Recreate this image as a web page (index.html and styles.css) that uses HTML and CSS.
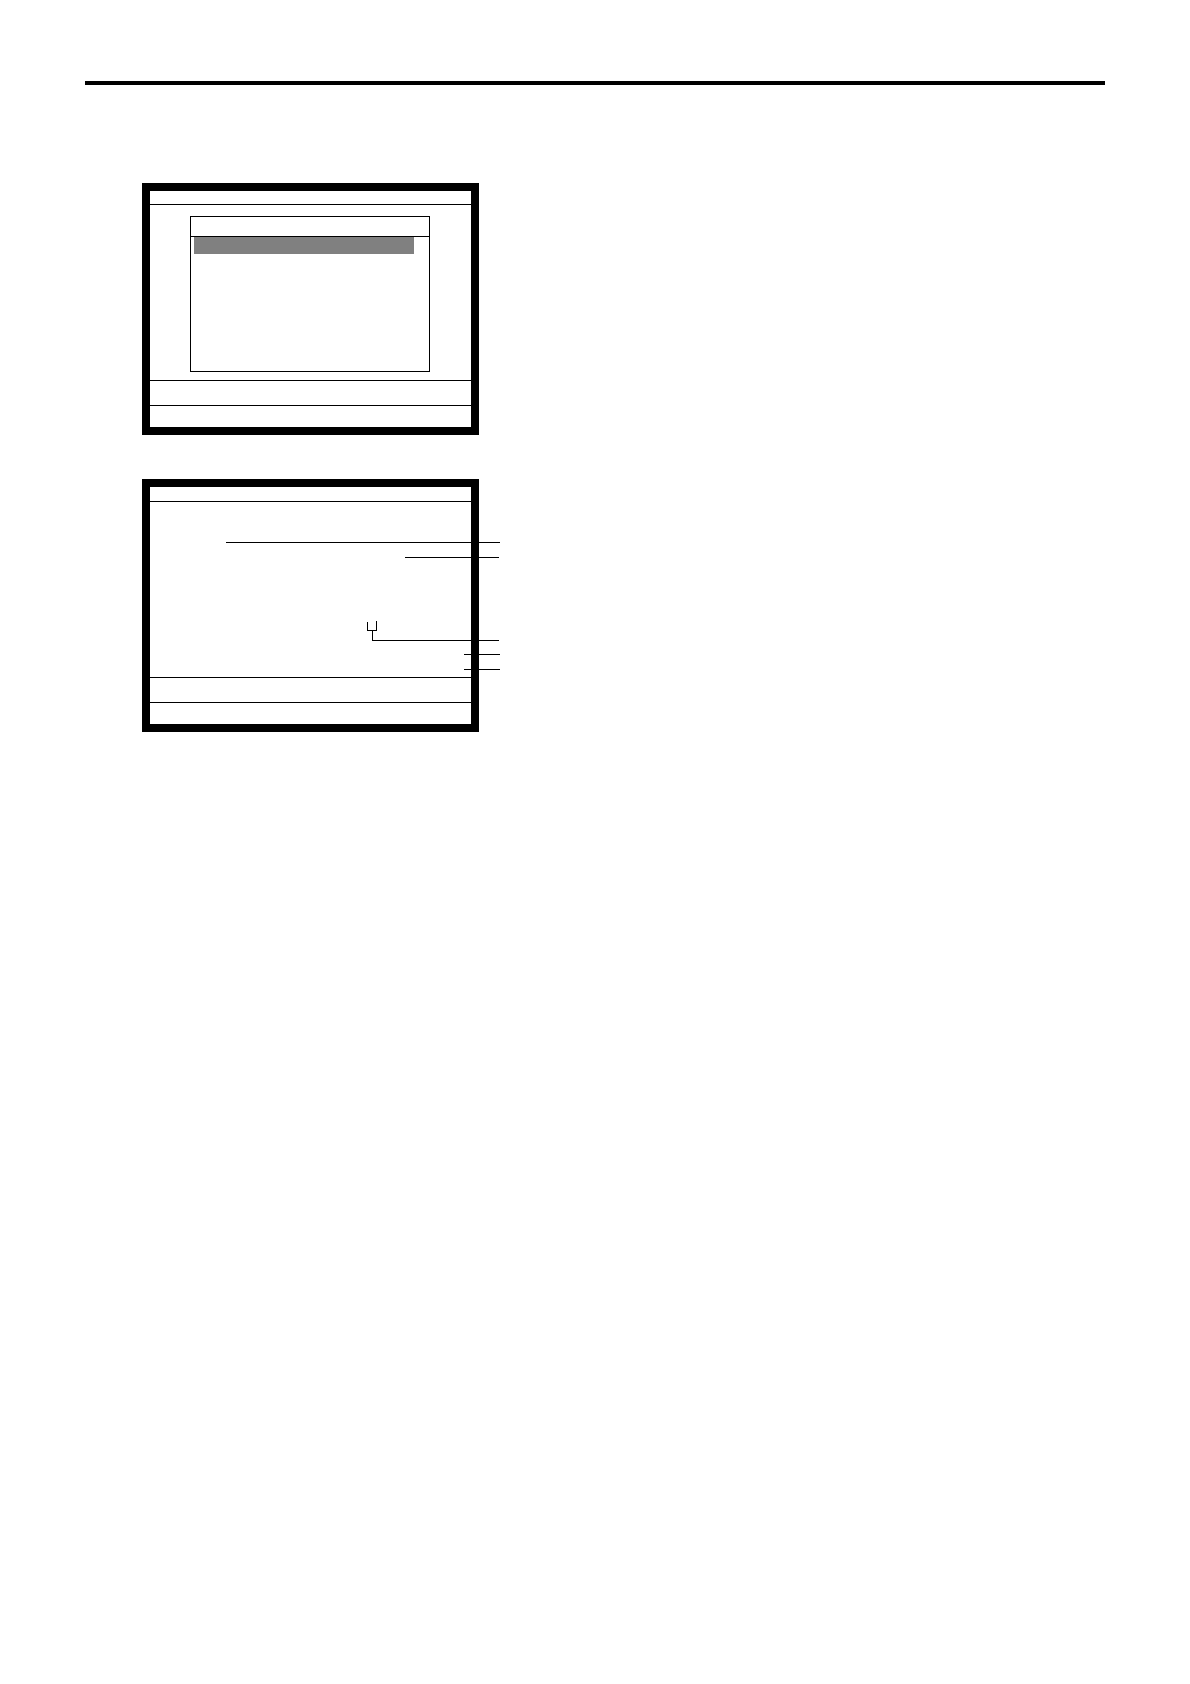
FILE: index.html
```html
<!DOCTYPE html>
<html lang="en">
<head>
    <meta charset="UTF-8">
    <meta name="viewport" content="width=device-width, initial-scale=1.0">
    <link rel="stylesheet" href="styles.css">
</head>
<body>
    <hr class="page-rule">

    <main class="screens">
        <!-- Screen with menu window -->
        <section class="screen">
            <div class="title-bar"></div>
            <div class="screen-body">
                <div class="menu">
                    <div class="menu-title"></div>
                    <div class="menu-selected"></div>
                </div>
            </div>
            <div class="message-bar"></div>
            <div class="key-bar"></div>
        </section>

        <!-- Screen with leader lines -->
        <section class="screen screen-detail">
            <div class="title-bar"></div>
            <div class="screen-body">
                <svg class="leaders" width="350" height="175" viewBox="0 0 350 175" aria-hidden="true">
                    <path d="M76 40.5H350"/>
                    <path d="M255 55.5H349"/>
                    <path d="M217.5 120V128.5H226.5V119"/>
                    <path d="M222.5 128.5V138.5H349"/>
                    <path d="M314 152.5H350"/>
                    <path d="M314 167.5H350"/>
                </svg>
            </div>
            <div class="message-bar"></div>
            <div class="key-bar"></div>
        </section>
    </main>
</body>
</html>
```
FILE: styles.css
```css
* {
    box-sizing: border-box;
}
body {
    margin: 0;
    padding: 81px 85px;
    background: #fff;
    font-family: "Liberation Sans", Arial, sans-serif;
}
.page-rule {
    height: 4px;
    margin: 0 0 98px;
    border: none;
    background: #000;
}
.screens {
    display: flex;
    flex-direction: column;
    gap: 44px;
    padding-left: 57px;
}
.screen {
    width: 100%;
    max-width: 337px;
    border: 8px solid #000;
}
.title-bar {
    height: 14px;
    border-bottom: 1px solid #000;
}
.screen-detail .title-bar {
    height: 15px;
}
.screen-body {
    position: relative;
    height: 175px;
    padding: 11px 41px 8px 40px;
}
.menu {
    height: 100%;
    border: 1px solid #000;
}
.menu-title {
    height: 20px;
    border-bottom: 1px solid #000;
}
.menu-selected {
    height: 17px;
    margin: 0 15px 0 3px;
    background: #808080;
}
.message-bar {
    height: 25px;
    border-top: 1px solid #000;
}
.key-bar {
    height: 22px;
    border-top: 1px solid #000;
}

/* Lines run out over the screen frame */
.leaders {
    position: absolute;
    top: 0;
    left: 0;
    fill: none;
    stroke: #000;
    stroke-width: 1px;
    shape-rendering: crispEdges;
}
```
